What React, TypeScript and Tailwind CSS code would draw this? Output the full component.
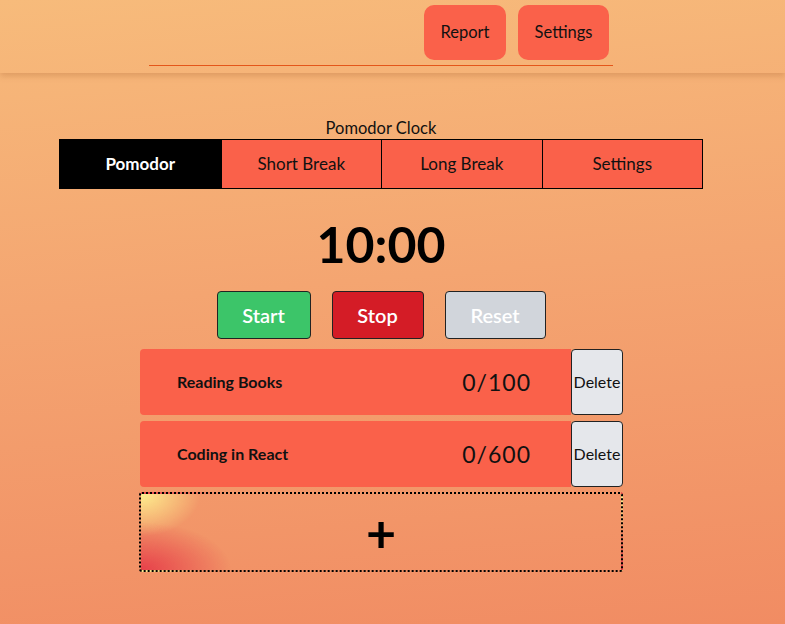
import React from "react";

const tasks = [
  { title: "Reading Books", count: "0/100" },
  { title: "Coding in React", count: "0/600" },
];

export default function App() {
  return (
    <div className="min-h-screen w-full bg-[linear-gradient(175deg,#f7bb7b_0%,#f4a571_45%,#f18c63_100%)] font-['Lato',sans-serif] text-[#111]">
      <header className="h-[73px] shadow-[0_3px_6px_rgba(150,80,30,0.25)] pr-[23px] flex justify-center">
        <div className="w-[464px] flex flex-col">
          <div className="flex justify-end gap-3 pt-[5px] pr-[4px]">
            <button className="h-[55px] w-[82px] rounded-[10px] bg-[#fa614a] text-[16.5px] leading-[20px] pb-[2px]">Report</button>
            <button className="h-[55px] w-[91px] rounded-[10px] bg-[#fa614a] text-[16.5px] leading-[20px] pb-[2px]">Settings</button>
          </div>
          <div className="mt-[5px] h-px bg-[#e4561a]" />
        </div>
      </header>
      <main className="pr-[23px] flex flex-col items-center">
        <div className="mt-[45px] text-[16.5px] leading-[21px]">Pomodor Clock</div>
        <div className="w-[644px] h-[50px] grid grid-cols-4 border border-black">
          <button className="bg-black text-white font-bold text-[17px]">Pomodor</button>
          <button className="bg-[#fa614a] border-l border-black text-[17px]">Short Break</button>
          <button className="bg-[#fa614a] border-l border-black text-[17px]">Long Break</button>
          <button className="bg-[#fa614a] border-l border-black text-[17px]">Settings</button>
        </div>
        <div className="mt-[25px] text-[50px] leading-[60px] font-bold text-black">10:00</div>
        <div className="mt-[17px] flex gap-[21px]">
          <button className="w-[94px] h-[48px] rounded-[4px] border border-[#222] bg-[#3cc569] text-white text-[20px] font-semibold">Start</button>
          <button className="w-[92px] h-[48px] rounded-[4px] border border-[#222] bg-[#d41c26] text-white text-[20px] font-semibold">Stop</button>
          <button className="w-[101px] h-[48px] rounded-[4px] border border-[#222] bg-[#d1d5db] text-white text-[20px] font-semibold">Reset</button>
        </div>
        <div className="mt-[10px] w-[484px] flex flex-col gap-[6px]">
          {tasks.map((t) => (
            <div key={t.title} className="flex h-[66px] pl-[1px]">
              <div className="flex-1 rounded-l-[4px] bg-[#fa614a] flex items-center pl-[37px] pr-[40px]">
                <span className="font-bold text-[16px]">{t.title}</span>
                <span className="ml-auto text-[23px] tracking-[1px]">{t.count}</span>
              </div>
              <button className="w-[52px] rounded-[4px] border border-[#222] bg-[#e5e7eb] text-[16px]">Delete</button>
            </div>
          ))}
          <div className="relative mt-[-1px] h-[80px] rounded-[3px] border-2 border-dotted border-black overflow-hidden flex items-center justify-center bg-[radial-gradient(ellipse_60px_42px_at_0%_0%,#fdee8e,transparent),radial-gradient(ellipse_90px_48px_at_0%_100%,#e6404a,transparent)]">
            <span className="text-[52px] leading-none font-bold text-black">+</span>
          </div>
        </div>
      </main>
    </div>
  );
}
